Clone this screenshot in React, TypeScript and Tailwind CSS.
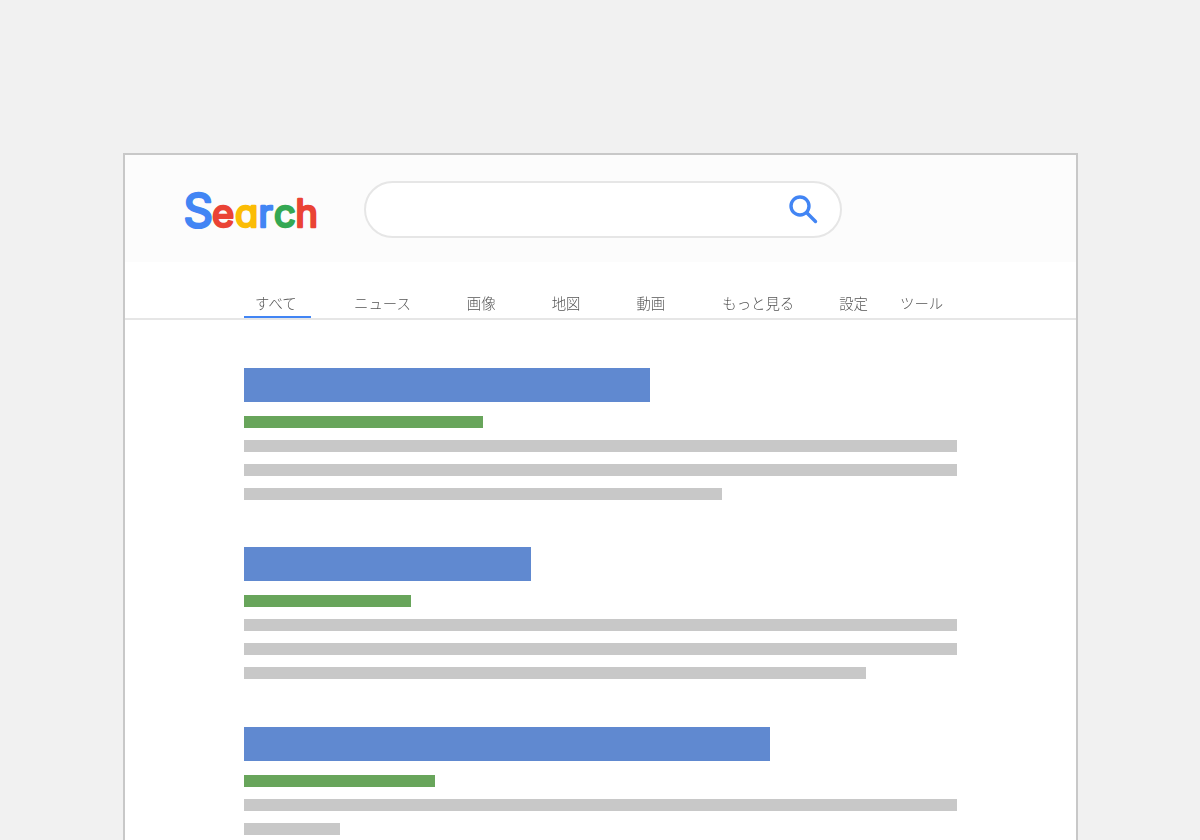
const tabs = [
  { label: 'すべて', active: true, className: 'mr-[31px] w-[67px] pl-[11px]' },
  { label: 'ニュース', className: 'mr-[32px]' },
  { label: '画像', className: 'mr-[32px]' },
  { label: '地図', className: 'mr-[32px]' },
  { label: '動画', className: 'mr-[33px]' },
  { label: 'もっと見る', className: 'mr-[21px]' },
  { label: '設定', className: 'mr-[8px]' },
  { label: 'ツール', className: '' },
];

const results = [
  { title: 'w-[406px]', url: 'w-[239px]', lines: ['w-[713px]', 'w-[713px]', 'w-[478px]'] },
  { title: 'w-[287px]', url: 'w-[167px]', lines: ['w-[713px]', 'w-[713px]', 'w-[622px]'] },
  { title: 'w-[526px]', url: 'w-[191px]', lines: ['w-[713px]', 'w-[96px]'] },
];

// logo letters, x is measured from the left edge of the svg
const letters = [
  { ch: 'S', x: 2.5, size: 46, color: '#4285f4' },
  { ch: 'e', x: 31, size: 38, color: '#ea4335' },
  { ch: 'a', x: 54, size: 38, color: '#fbbc05' },
  { ch: 'r', x: 77.5, size: 38, color: '#4285f4' },
  { ch: 'c', x: 93, size: 38, color: '#34a853' },
  { ch: 'h', x: 114.5, size: 38, color: '#ea4335' },
];

function Logo() {
  return (
    <svg width="140" height="64" viewBox="0 0 140 64" className="block">
      <text
        y="50"
        fontFamily="Inter, sans-serif"
        fontWeight="400"
        strokeWidth="2.5"
        strokeLinejoin="round"
        style={{ fontFeatureSettings: '"cv11"' }}
      >
        {letters.map((l) => (
          <tspan key={l.ch} x={l.x} fontSize={l.size} fill={l.color} stroke={l.color}>
            {l.ch}
          </tspan>
        ))}
      </text>
    </svg>
  );
}

function SearchIcon() {
  return (
    <svg width="30" height="30" viewBox="0 0 30 30" fill="none" stroke="#4285f4" strokeWidth="3.4" strokeLinecap="round">
      <circle cx="11" cy="11" r="9" />
      <path d="M17.8 17.8 L26.5 26.5" />
    </svg>
  );
}

export default function App() {
  return (
    <div className="h-[840px] overflow-hidden bg-[#f1f1f1] pt-[153px] pl-[123px] [font-family:'Noto_Sans_CJK_JP','Noto_Sans',sans-serif]">
      <div className="h-[700px] w-[955px] border-2 border-[#c8c8c8] bg-white">
        <header className="flex h-[107px] items-center bg-[#fcfcfc] pl-[56px]">
          <div className="w-[183px]">
            <Logo />
          </div>
          <div className="mt-[2px] flex h-[57px] w-[478px] items-center justify-end rounded-full border-2 border-[#e6e6e6] bg-white pr-[21px]">
            <SearchIcon />
          </div>
        </header>

        <nav className="flex h-[58px] items-end border-b-2 border-[#e6e6e6] pl-[119px] [will-change:transform]">
          {tabs.map((tab) => (
            <div
              key={tab.label}
              className={`px-3 pb-[3px] text-[14.4px] leading-[20px] font-light text-[#555555] ${tab.className} ${
                tab.active ? 'border-b-2 border-[#4285f4]' : 'border-b-2 border-transparent'
              }`}
            >
              {tab.label}
            </div>
          ))}
        </nav>

        <main className="flex flex-col gap-[47px] pt-[48px] pl-[119px]">
          {results.map((result, i) => (
            <section key={result.title} className={`flex flex-col ${i === 2 ? 'mt-[1px]' : ''}`}>
              <div className={`h-[34px] bg-[#6089d0] ${result.title}`} />
              <div className={`mt-[14px] h-3 bg-[#68a55b] ${result.url}`} />
              {result.lines.map((line, j) => (
                <div key={j} className={`mt-3 h-3 bg-[#c8c8c8] ${line}`} />
              ))}
            </section>
          ))}
        </main>
      </div>
    </div>
  );
}
